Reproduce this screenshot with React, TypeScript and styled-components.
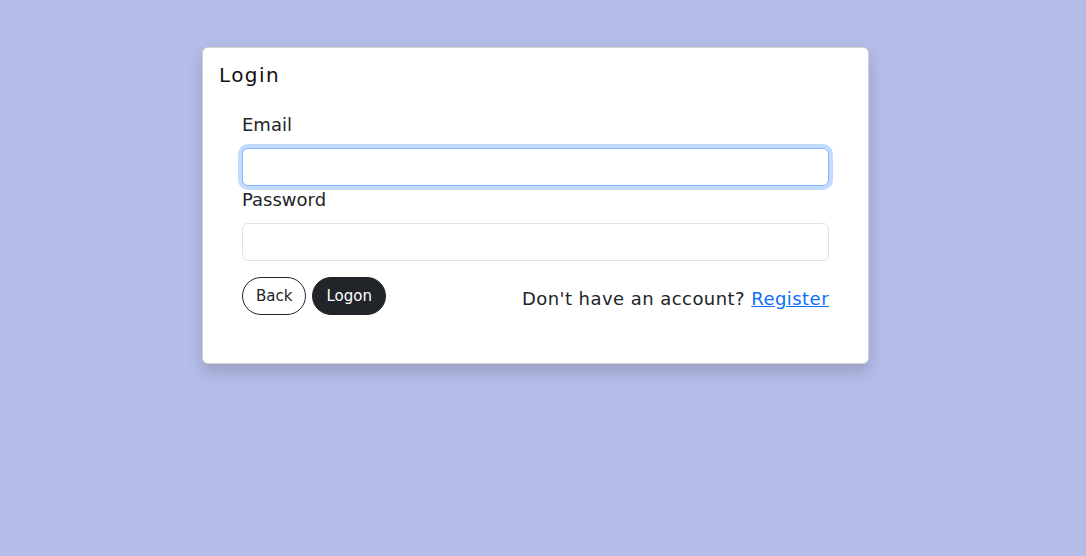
import React from 'react';
import styled, { createGlobalStyle } from 'styled-components';

const GlobalStyle = createGlobalStyle`
  * { box-sizing: border-box; }
  body {
    margin: 0;
    background: #b4bce8;
    font-family: 'DejaVu Sans', 'Open Sans', sans-serif;
    color: #212529;
  }
`;

const Page = styled.div`
  min-height: 556px;
  padding: 47px 0 0 202px;
`;

const Card = styled.div`
  width: 667px;
  background: #fff;
  border: 1px solid rgba(0, 0, 0, 0.175);
  border-radius: 6px;
  box-shadow: 0 8px 16px rgba(0, 0, 0, 0.15);
  padding: 15px 16px 16px;
`;

const Title = styled.h5`
  margin: 0;
  font-family: 'DejaVu Sans', sans-serif;
  font-size: 20px;
  font-weight: 400;
  line-height: 24px;
  letter-spacing: 1.4px;
  color: #111;
`;

const Form = styled.form`
  padding: 0 23px;
  margin-top: 24px;
`;

const Label = styled.label`
  display: block;
  font-size: 18px;
  line-height: 28px;
  margin-bottom: 9px;
  color: #212529;
`;

const Input = styled.input<{ focused?: boolean }>`
  display: block;
  width: 100%;
  height: 38px;
  padding: 6px 12px;
  font-size: 16px;
  border-radius: 6px;
  outline: none;
  border: 1px solid ${(p) => (p.focused ? '#86b7fe' : '#dee2e6')};
  box-shadow: ${(p) => (p.focused ? '0 0 0 4px rgba(13, 110, 253, 0.25)' : 'none')};
  caret-color: #000;
`;

const Footer = styled.div`
  display: flex;
  align-items: center;
  justify-content: space-between;
  margin-top: 16px;
  margin-bottom: 32px;
`;

const Buttons = styled.div`
  display: flex;
  gap: 6px;
`;

const Pill = styled.button<{ dark?: boolean }>`
  height: 38px;
  padding: 0 13px;
  border-radius: 19px;
  font-family: 'DejaVu Sans', sans-serif;
  font-size: 15px;
  border: 1px solid #212529;
  background: ${(p) => (p.dark ? '#212529' : '#fff')};
  color: ${(p) => (p.dark ? '#fff' : '#212529')};
`;

const Hint = styled.p`
  margin: 5px 0 0;
  font-size: 18px;
  letter-spacing: 0.45px;
  color: #212529;
  a {
    color: #0d6efd;
  }
`;

export default function App() {
  return (
    <Page>
      <GlobalStyle />
      <Card>
        <Title>Login</Title>
        <Form onSubmit={(e) => e.preventDefault()}>
          <Label htmlFor="email">Email</Label>
          <Input id="email" type="email" focused autoFocus />
          <Label htmlFor="password">Password</Label>
          <Input id="password" type="password" />
          <Footer>
            <Buttons>
              <Pill type="button">Back</Pill>
              <Pill type="submit" dark>
                Logon
              </Pill>
            </Buttons>
            <Hint>
              Don't have an account? <a href="#">Register</a>
            </Hint>
          </Footer>
        </Form>
      </Card>
    </Page>
  );
}
